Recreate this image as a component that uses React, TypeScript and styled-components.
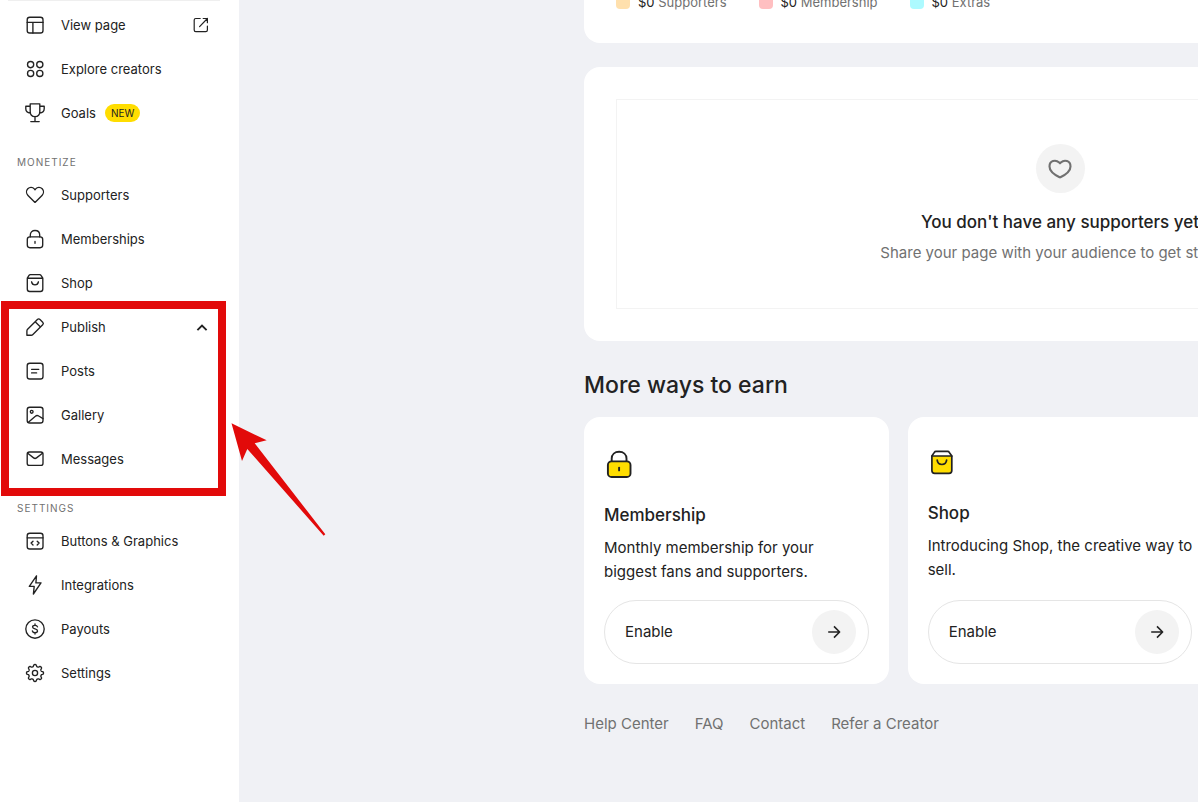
import React from "react";
import styled, { createGlobalStyle } from "styled-components";

const ink = "#222222";
const muted = "#717171";
const canvas = "#f0f1f5";
const yellow = "#ffdd00";
const red = "#e20a0a";

const GlobalStyle = createGlobalStyle`
  * { box-sizing: border-box; }
  body {
    margin: 0;
    background: ${canvas};
    color: ${ink};
    font-family: Inter, "Liberation Sans", sans-serif;
    font-size: 15px;
    line-height: 24px;
    overflow: hidden;
  }
  h2, h3, p, ul { margin: 0; padding: 0; }
  button { font: inherit; color: inherit; cursor: pointer; }
  svg { display: block; flex: none; }
`;

const Page = styled.div`
  position: relative;
  display: flex;
  min-height: 100vh;
  overflow: hidden;
`;

const Sidebar = styled.nav`
  flex: none;
  width: 239px;
  background: #ffffff;
`;

const Divider = styled.hr`
  height: 1px;
  margin: 0 19px 2px 8px;
  border: 0;
  background: #efefef;
`;

const NavList = styled.ul`
  position: relative;
  list-style: none;
`;

const NavLink = styled.a`
  display: flex;
  align-items: center;
  gap: 14px;
  width: 100%;
  height: 44px;
  padding: 0 26px 0 23px;
  border: 0;
  background: none;
  color: ${ink};
  font-size: 13px;
  text-align: left;
  text-decoration: none;
`;

const Trailing = styled.span`
  margin-left: auto;
`;

const NavHeading = styled.h2`
  padding: 19px 17px 3px;
  color: ${muted};
  font-size: 10px;
  line-height: 16px;
  font-weight: 400;
  letter-spacing: 1px;
  text-transform: uppercase;
`;

const Badge = styled.span`
  margin-left: -5px;
  padding: 0 6px;
  border-radius: 9px;
  background: ${yellow};
  font-size: 10px;
  line-height: 18px;
`;

const Highlight = styled.div`
  position: absolute;
  top: -4px;
  left: 1px;
  width: 225px;
  height: 195px;
  border: 8px solid ${red};
  pointer-events: none;
`;

const Pointer = styled.svg`
  position: absolute;
  top: 422px;
  left: 230px;
  pointer-events: none;
`;

const Main = styled.main`
  flex: 1;
  min-width: 0;
  padding-left: 345px;
  overflow: hidden;
`;

const Column = styled.div`
  width: 952px;
`;

const Panel = styled.section`
  padding: 32px;
  border-radius: 16px;
  background: #ffffff;
`;

const EarningsPanel = styled(Panel)`
  margin: -40px 0 24px;
  padding-bottom: 31px;
`;

const Legend = styled.ul`
  display: flex;
  gap: 32px;
  list-style: none;
  color: ${muted};
  font-size: 13px;
  line-height: 20px;
`;

const LegendItem = styled.li`
  display: flex;
  align-items: center;
  gap: 8px;
`;

const Amount = styled.span`
  color: ${ink};
`;

const Swatch = styled.span<{ $color: string }>`
  width: 14px;
  height: 14px;
  border-radius: 4px;
  background: ${(p) => p.$color};
`;

const EmptyState = styled.div`
  display: flex;
  flex-direction: column;
  align-items: center;
  padding: 44px 16px 43px;
  border: 1px solid #f3f3f3;
`;

const Round = styled.span<{ $size: number }>`
  display: flex;
  align-items: center;
  justify-content: center;
  width: ${(p) => p.$size}px;
  height: ${(p) => p.$size}px;
  border-radius: 50%;
  background: #f3f3f3;
`;

const EmptyTitle = styled.h3`
  margin: 17px 0 7px;
  font-size: 17px;
  font-weight: 500;
`;

const EmptyText = styled.p`
  color: ${muted};
`;

const SectionTitle = styled.h2`
  margin: 28px 0 16px;
  font-size: 23px;
  line-height: 32px;
  font-weight: 500;
`;

const Cards = styled.div`
  display: grid;
  grid-template-columns: repeat(3, 1fr);
  gap: 19px;
`;

const Card = styled.article`
  display: flex;
  flex-direction: column;
  padding: 31px 20px 20px;
  border-radius: 16px;
  background: #ffffff;
`;

const CardTitle = styled.h3`
  margin: 23px 0 9px;
  font-size: 17px;
  font-weight: 500;
`;

const CardText = styled.p`
  margin-bottom: 16px;
`;

const EnableButton = styled.button`
  display: flex;
  align-items: center;
  justify-content: space-between;
  height: 64px;
  margin-top: auto;
  padding: 0 12px 0 20px;
  border: 1px solid #e5e5e5;
  border-radius: 32px;
  background: #ffffff;
`;

const Footer = styled.footer`
  display: flex;
  gap: 26px;
  padding: 28px 0;
`;

const FooterLink = styled.a`
  color: ${muted};
  text-decoration: none;
`;

const Icon = ({ children }: { children: React.ReactNode }) => (
  <svg width="24" height="24" viewBox="0 0 24 24" fill="none" stroke={ink} strokeWidth="1.35" strokeLinecap="round" strokeLinejoin="round" aria-hidden="true">
    {children}
  </svg>
);

const Frame = () => <rect x="4.2" y="4.2" width="15.8" height="15.8" rx="2.6" />;

const gearPath =
  Array.from({ length: 128 }, (_, i) => {
    const a = (i / 128) * Math.PI * 2;
    const r = 7.5 + 1.05 * Math.tanh(1.8 * Math.cos(8 * a));
    return `${i ? "L" : "M"}${(12 + r * Math.sin(a)).toFixed(2)} ${(12 - r * Math.cos(a)).toFixed(2)}`;
  }).join("") + "Z";

const icons = {
  page: <><Frame /><path d="M4.2 9.4H20M9.9 9.4V20" /></>,
  explore: <><circle cx="7.6" cy="7.6" r="3.1" /><circle cx="16.8" cy="7.6" r="3.1" /><circle cx="7.6" cy="16.4" r="3.1" /><circle cx="16.8" cy="16.4" r="3.1" /></>,
  goals: <path d="M7.2 2.8H16.8V10.5C16.8 13.4 15 15.6 12 15.6S7.2 13.4 7.2 10.5ZM7.2 5.2H2.8V7.8C2.8 10.4 4.8 11.8 7.4 12M16.8 5.2H21.2V7.8C21.2 10.4 19.2 11.8 16.6 12M12 15.6V20.6M7.8 20.6H16.2" />,
  heart: <path d="M12 19.4L5 12.4C3.2 10.6 3 7.6 4.8 5.7C6.7 3.8 9.6 3.9 11.3 5.9L12 6.7L12.7 5.9C14.4 3.9 17.3 3.8 19.2 5.7C21 7.6 20.8 10.6 19 12.4Z" />,
  lock: <><rect x="4.3" y="9.9" width="15.4" height="10.8" rx="2.6" /><path d="M7.3 9.9V8C7.3 5.3 9.3 3.5 12 3.5S16.7 5.3 16.7 8V9.9M12 14.4V16.2" /></>,
  shop: <><path d="M4.3 7.2L6 4.4C6.3 3.9 6.7 3.6 7.4 3.6H16.6C17.3 3.6 17.7 3.9 18 4.4L19.8 7.2V18C19.8 19.6 19 20.5 17.4 20.5H6.7C5.1 20.5 4.3 19.6 4.3 18ZM4.3 7.2H19.8" /><path d="M8.6 10.8C8.9 12.8 10.2 13.8 12 13.8S15.1 12.8 15.4 10.8" /></>,
  pencil: <path d="M3.9 20.2V15.9C3.9 15.2 4.1 14.7 4.6 14.2L14.4 4.5C15.2 3.7 16.2 3.7 17 4.5L19.7 7.2C20.5 8 20.5 9 19.7 9.8L9.9 19.5C9.4 20 8.9 20.2 8.2 20.2ZM12.2 6.7L17.5 12" />,
  posts: <><Frame /><path d="M8.6 10.3H15.8M8.6 13.9H13.6" /></>,
  gallery: <><Frame /><circle cx="8.7" cy="8.8" r="1.4" /><path d="M5.1 19.4L12.4 13.2C13.4 12.3 14.6 12.3 15.7 13L20 15.6" /></>,
  mail: <><rect x="4.2" y="5" width="15.8" height="13.4" rx="2.2" /><path d="M4.7 6.2L10.6 10.9C11.5 11.6 12.6 11.6 13.5 10.9L19.5 6.2" /></>,
  code: <><Frame /><path d="M4.2 8.8H20M10 12.2L8.1 14.1L10 16M14.2 12.2L16.1 14.1L14.2 16" /></>,
  bolt: <path d="M13.5 2.8L6.3 13.4H11.2L10.4 21L18 9.9H12.9Z" />,
  payout: <><circle cx="12" cy="12" r="9.2" /><path d="M14.5 9.9C14.2 8.9 13.3 8.4 12 8.4C10.6 8.4 9.6 9 9.6 10.1C9.6 12.7 14.5 11.2 14.5 13.9C14.5 15 13.5 15.7 12 15.7C10.6 15.7 9.7 15.1 9.4 14M12 7V8.4M12 15.7V17.1" /></>,
  gear: <><path d={gearPath} /><circle cx="12" cy="12" r="2.6" /></>,
};

const NavItem = ({ icon, label, children }: { icon: keyof typeof icons; label: string; children?: React.ReactNode }) => (
  <li>
    <NavLink href="#">
      <Icon>{icons[icon]}</Icon>
      {label}
      {children}
    </NavLink>
  </li>
);

const ExternalIcon = () => (
  <svg width="24" height="24" viewBox="0 0 24 24" fill="none" stroke={ink} strokeWidth="1.2" strokeLinecap="round" strokeLinejoin="round" aria-hidden="true">
    <path d="M11.2 5.5H6.8C5.8 5.5 5.2 6.1 5.2 7.1V17C5.2 18 5.8 18.6 6.8 18.6H16.8C17.8 18.6 18.4 18 18.4 17V13M14.2 5.5H18.4V9.7M18.4 5.5L10.6 13.6" />
  </svg>
);

const ArrowIcon = () => (
  <svg width="24" height="24" viewBox="0 0 24 24" fill="none" stroke={ink} strokeWidth="1.6" strokeLinejoin="round" aria-hidden="true">
    <path d="M6.2 12H17.4M12 6.4L17.6 12L12 17.6" />
  </svg>
);

const LockArt = () => (
  <svg width="30" height="32" viewBox="0 0 30 32" fill="none" stroke={ink} strokeWidth="1.9" strokeLinecap="round" aria-hidden="true">
    <path d="M7.7 13.5V10.6C7.7 6.5 10.8 3.7 15.1 3.7S22.5 6.5 22.5 10.6V13.5" />
    <rect x="3.9" y="13.4" width="22.6" height="15.6" rx="3.6" fill={yellow} />
    <path d="M15.1 19.6V22.4" />
  </svg>
);

const ShopArt = () => (
  <svg width="28" height="30" viewBox="0 0 28 30" fill="none" stroke={ink} strokeWidth="1.7" strokeLinecap="round" strokeLinejoin="round" aria-hidden="true">
    <path d="M3.9 8L6.3 4.4C6.7 3.7 7.2 3.4 8 3.4H19.6C20.4 3.4 20.9 3.7 21.3 4.4L23.8 8" />
    <path d="M3.9 8H23.8V22.6C23.8 24.5 22.8 25.4 21 25.4H6.7C4.9 25.4 3.9 24.5 3.9 22.6Z" fill={yellow} />
    <path d="M9.2 12.2C9.5 15 11.3 16.5 13.9 16.5S18.3 15 18.6 12.2" />
  </svg>
);

const WaysCard = ({ art, title, text }: { art: React.ReactNode; title: string; text: string }) => (
  <Card>
    {art}
    <CardTitle>{title}</CardTitle>
    <CardText>{text}</CardText>
    <EnableButton type="button">
      Enable
      <Round $size={44}>
        <ArrowIcon />
      </Round>
    </EnableButton>
  </Card>
);

export default function App() {
  return (
    <Page>
      <GlobalStyle />
      <Sidebar>
        <Divider />
        <NavList>
          <NavItem icon="page" label="View page">
            <Trailing><ExternalIcon /></Trailing>
          </NavItem>
          <NavItem icon="explore" label="Explore creators" />
          <NavItem icon="goals" label="Goals">
            <Badge>NEW</Badge>
          </NavItem>
        </NavList>
        <NavHeading>Monetize</NavHeading>
        <NavList>
          <NavItem icon="heart" label="Supporters" />
          <NavItem icon="lock" label="Memberships" />
          <NavItem icon="shop" label="Shop" />
        </NavList>
        <NavList as="div">
          <NavLink as="button" type="button" aria-expanded="true">
            <Icon>{icons.pencil}</Icon>
            Publish
            <Trailing>
              <svg width="24" height="24" viewBox="0 0 24 24" fill="none" stroke={ink} strokeWidth="1.9" aria-hidden="true">
                <path d="M8.4 15.2L13 10.6L17.6 15.2" />
              </svg>
            </Trailing>
          </NavLink>
          <NavList>
            <NavItem icon="posts" label="Posts" />
            <NavItem icon="gallery" label="Gallery" />
            <NavItem icon="mail" label="Messages" />
          </NavList>
          <Highlight />
        </NavList>
        <NavHeading>Settings</NavHeading>
        <NavList>
          <NavItem icon="code" label="Buttons &amp; Graphics" />
          <NavItem icon="bolt" label="Integrations" />
          <NavItem icon="payout" label="Payouts" />
          <NavItem icon="gear" label="Settings" />
        </NavList>
      </Sidebar>
      <Main>
        <Column>
          <EarningsPanel>
            <Legend>
              <LegendItem><Swatch $color="#ffe0ad" /><span><Amount>$0</Amount> Supporters</span></LegendItem>
              <LegendItem><Swatch $color="#ffbfc1" /><span><Amount>$0</Amount> Membership</span></LegendItem>
              <LegendItem><Swatch $color="#adfaff" /><span><Amount>$0</Amount> Extras</span></LegendItem>
            </Legend>
          </EarningsPanel>
          <Panel>
            <EmptyState>
              <Round $size={49}>
                <svg width="28" height="28" viewBox="0 0 28 28" fill="none" stroke={muted} strokeWidth="2.1" strokeLinejoin="round" aria-hidden="true">
                  <path d="M14 22.4C10.6 20.7 3.5 17.4 3.5 11.4C3.5 5.6 9.6 4.2 13.2 7.5L14 8.3L14.8 7.5C18.4 4.2 24.5 5.6 24.5 11.4C24.5 17.4 17.4 20.7 14 22.4Z" />
                </svg>
              </Round>
              <EmptyTitle>You don't have any supporters yet</EmptyTitle>
              <EmptyText>Share your page with your audience to get started.</EmptyText>
            </EmptyState>
          </Panel>
          <SectionTitle>More ways to earn</SectionTitle>
          <Cards>
            <WaysCard art={<LockArt />} title="Membership" text="Monthly membership for your biggest fans and supporters." />
            <WaysCard art={<ShopArt />} title="Shop" text="Introducing Shop, the creative way to sell." />
          </Cards>
          <Footer>
            <FooterLink href="#">Help Center</FooterLink>
            <FooterLink href="#">FAQ</FooterLink>
            <FooterLink href="#">Contact</FooterLink>
            <FooterLink href="#">Refer a Creator</FooterLink>
          </Footer>
        </Column>
      </Main>
      <Pointer width="98" height="116" viewBox="230 422 98 116" fill={red} aria-hidden="true">
        <path d="M231.5 423.3L266.7 440.3L254.7 443.3L325.3 534.3L323.7 535.7L247.3 449L242 461Z" />
      </Pointer>
    </Page>
  );
}
